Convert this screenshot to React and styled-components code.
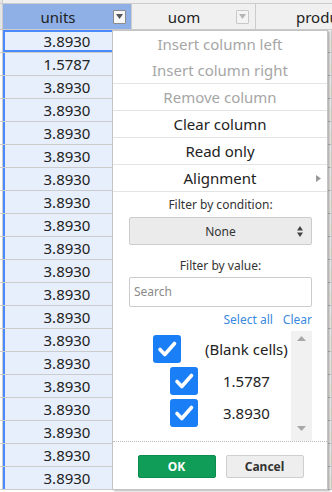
import styled, { createGlobalStyle } from 'styled-components'

const GlobalStyle = createGlobalStyle`
  html, body {
    margin: 0;
    padding: 0;
    background: #fff;
    overflow: hidden;
  }
  body {
    font-family: "Noto Sans", "DejaVu Sans", sans-serif;
    color: #222;
  }
`

const Page = styled.div`
  position: relative;
  width: 332px;
  height: 492px;
  overflow: hidden;
`

const TopStrip = styled.div`
  display: flex;
  height: 4px;
  box-sizing: border-box;
  background: #f0f0f0;
  border-bottom: 1px solid #ccc;
`

const Row = styled.div`
  display: flex;
  height: ${(p) => (p.$head ? 26 : 23)}px;
  box-sizing: border-box;
  border-bottom: 1px solid #ccc;
  background: ${(p) => (p.$head ? '#f0f0f0' : '#fff')};
`

const Gutter = styled.div`
  width: 3px;
  flex: none;
  box-sizing: border-box;
  border-right: 1px solid #ccc;
  background: ${(p) => (p.$head ? '#e6e6e6' : '#fff')};
`

const HeadCell = styled.div`
  display: flex;
  align-items: center;
  flex: ${(p) => (p.$w ? 'none' : '1')};
  width: ${(p) => (p.$w ? `${p.$w}px` : 'auto')};
  box-sizing: border-box;
  border-right: 1px solid #ccc;
  background: ${(p) => (p.$active ? '#8eb0e7' : '#f0f0f0')};
  font-size: 15px;
  color: #222;
`

const HeadLabel = styled.span`
  flex: 1;
  text-align: ${(p) => (p.$left ? 'left' : 'center')};
  padding-left: ${(p) => (p.$left ? '40px' : '0')};
  white-space: nowrap;
  overflow: hidden;
`

const DropButton = styled.div`
  display: flex;
  align-items: center;
  justify-content: center;
  width: 13px;
  height: 14px;
  box-sizing: border-box;
  margin-right: ${(p) => p.$mr}px;
  border: 1px solid ${(p) => (p.$faint ? '#c8c8c8' : '#8a8a8a')};
  background: ${(p) => (p.$faint ? '#f4f4f4' : '#f7f7f7')};
  border-radius: 1px;
`

const Cell = styled.div`
  flex: ${(p) => (p.$w ? 'none' : '1')};
  width: ${(p) => (p.$w ? `${p.$w}px` : 'auto')};
  box-sizing: border-box;
  border-right: 1px solid #ccc;
  font-size: 15px;
  line-height: 22px;
  white-space: nowrap;
  overflow: hidden;
`

const UnitCell = styled(Cell)`
  text-align: center;
  background: #e7effd;
  color: #222;
  box-shadow: ${(p) =>
    p.$current ? 'inset 0 0 0 2px #4b89ff' : 'inset 2px 0 0 #4b89ff'};
`

const ProductCell = styled(Cell)`
  padding-left: 74px;
  color: #7b1f2e;
`

const Menu = styled.div`
  position: absolute;
  left: 112px;
  top: 30px;
  width: 216px;
  height: 460px;
  box-sizing: border-box;
  background: #fff;
  border: 1px solid #c4c4c4;
  box-shadow: 2px 1px 2px rgba(0, 0, 0, 0.3);
  display: flex;
  flex-direction: column;
`

const Item = styled.div`
  display: grid;
  grid-template-columns: 20px 1fr 20px;
  align-items: center;
  height: 26px;
  font-size: 15px;
  color: ${(p) => (p.$disabled ? '#a6a6a6' : '#222')};
  text-align: center;
`

const SubArrow = styled.span`
  justify-self: end;
  padding-right: 6px;
  display: flex;
`

const Separator = styled.div`
  height: 1px;
  background: #e4e4e4;
`

const FilterSection = styled.div`
  display: flex;
  flex-direction: column;
  padding: 0 15px 0 16px;
`

const Label = styled.div`
  font-size: 12px;
  line-height: 16px;
  text-align: center;
  color: #333;
  margin-top: ${(p) => p.$mt}px;
`

const Select = styled.div`
  display: grid;
  grid-template-columns: 1fr 14px;
  align-items: center;
  height: 28px;
  margin-top: 4px;
  box-sizing: border-box;
  border: 1px solid #ccc;
  border-radius: 2px;
  background: #ebebeb;
  font-size: 12px;
  color: #333;
  text-align: center;
  padding-left: 14px;
`

const SearchBox = styled.div`
  height: 30px;
  margin-top: 3px;
  box-sizing: border-box;
  border: 1px solid #ccc;
  border-radius: 2px;
  padding-left: 4px;
  font-size: 12px;
  line-height: 28px;
  color: #8a8a8a;
`

const Links = styled.div`
  display: flex;
  justify-content: flex-end;
  gap: 10px;
  margin-top: 5px;
  font-size: 12px;
  line-height: 16px;
  color: #3b8ae0;
`

const ListBox = styled.div`
  display: flex;
  height: 110px;
  margin-top: 3px;
`

const ListItems = styled.div`
  flex: 1;
  padding-top: 2px;
`

const ListRow = styled.div`
  display: flex;
  align-items: center;
  height: 32px;
  padding-left: ${(p) => p.$indent}px;
  gap: ${(p) => p.$gap}px;
  font-size: 15px;
  color: #222;
`

const ScrollBar = styled.div`
  width: 21px;
  background: #f1f1f1;
  display: flex;
  flex-direction: column;
  justify-content: space-between;
  align-items: center;
  padding: 5px 0 10px;
  box-sizing: border-box;
`

const Dotted = styled.div`
  border-top: 1px dotted #bbb;
`

const Actions = styled.div`
  display: flex;
  justify-content: center;
  gap: 10px;
  padding-top: 13px;
  padding-left: 1px;
`

const Button = styled.div`
  width: 78px;
  height: 23px;
  box-sizing: border-box;
  border-radius: 2px;
  font-size: 12px;
  font-weight: bold;
  line-height: 21px;
  text-align: center;
  color: ${(p) => (p.$primary ? '#fff' : '#333')};
  background: ${(p) => (p.$primary ? '#0f9d58' : '#eee')};
  border: 1px solid ${(p) => (p.$primary ? '#0c8c4e' : '#cfcfcf')};
`

function Caret({ color }) {
  return (
    <svg width="7" height="5" viewBox="0 0 7 5">
      <path d="M0 0 H7 L3.5 5 Z" fill={color} />
    </svg>
  )
}

function Check() {
  return (
    <svg width="28" height="28" viewBox="0 0 28 28">
      <rect x="0" y="0" width="28" height="28" rx="3" fill="#1a7ef6" />
      <path
        d="M7 14.5 L11.8 19.5 L21.5 8.5"
        fill="none"
        stroke="#fff"
        strokeWidth="3.6"
        strokeLinecap="round"
        strokeLinejoin="round"
      />
    </svg>
  )
}

const values = [
  '3.8930', '1.5787', '3.8930', '3.8930', '3.8930', '3.8930', '3.8930',
  '3.8930', '3.8930', '3.8930', '3.8930', '3.8930', '3.8930', '3.8930',
  '3.8930', '3.8930', '3.8930', '3.8930', '3.8930', '3.8930',
]

export default function App() {
  return (
    <Page>
      <GlobalStyle />
      <TopStrip>
        <Gutter $head />
      </TopStrip>
      <Row $head>
        <Gutter $head />
        <HeadCell $w={129} $active>
          <HeadLabel>units</HeadLabel>
          <DropButton $mr={5}>
            <Caret color="#555" />
          </DropButton>
        </HeadCell>
        <HeadCell $w={124}>
          <HeadLabel>uom</HeadLabel>
          <DropButton $mr={6} $faint>
            <Caret color="#b5b5b5" />
          </DropButton>
        </HeadCell>
        <HeadCell>
          <HeadLabel $left>product</HeadLabel>
        </HeadCell>
      </Row>
      {values.map((v, i) => (
        <Row key={i}>
          <Gutter />
          <UnitCell $w={129} $current={i === 0}>
            {v}
          </UnitCell>
          <Cell $w={124} />
          <ProductCell>pcs</ProductCell>
        </Row>
      ))}

      <Menu>
        <Item $disabled>
          <span />
          <span>Insert column left</span>
          <span />
        </Item>
        <Item $disabled>
          <span />
          <span>Insert column right</span>
          <span />
        </Item>
        <Separator />
        <Item $disabled>
          <span />
          <span>Remove column</span>
          <span />
        </Item>
        <Separator />
        <Item>
          <span />
          <span>Clear column</span>
          <span />
        </Item>
        <Separator />
        <Item>
          <span />
          <span>Read only</span>
          <span />
        </Item>
        <Separator />
        <Item>
          <span />
          <span>Alignment</span>
          <SubArrow>
            <svg width="5" height="7" viewBox="0 0 5 7">
              <path d="M0 0 L5 3.5 L0 7 Z" fill="#999" />
            </svg>
          </SubArrow>
        </Item>
        <Separator />

        <FilterSection>
          <Label $mt={5}>Filter by condition:</Label>
          <Select>
            <span>None</span>
            <svg width="6" height="11" viewBox="0 0 6 11">
              <path d="M0 4.5 L3 0 L6 4.5 Z M0 6.5 L6 6.5 L3 11 Z" fill="#444" />
            </svg>
          </Select>
          <Label $mt={13}>Filter by value:</Label>
          <SearchBox>Search</SearchBox>
          <Links>
            <span>Select all</span>
            <span>Clear</span>
          </Links>
          <ListBox>
            <ListItems>
              <ListRow $indent={24} $gap={24}>
                <Check />
                <span>(Blank cells)</span>
              </ListRow>
              <ListRow $indent={41} $gap={25}>
                <Check />
                <span>1.5787</span>
              </ListRow>
              <ListRow $indent={41} $gap={25}>
                <Check />
                <span>3.8930</span>
              </ListRow>
            </ListItems>
            <ScrollBar>
              <svg width="9" height="5" viewBox="0 0 9 5">
                <path d="M0 5 L4.5 0 L9 5 Z" fill="#a8a8a8" />
              </svg>
              <svg width="9" height="5" viewBox="0 0 9 5">
                <path d="M0 0 H9 L4.5 5 Z" fill="#a8a8a8" />
              </svg>
            </ScrollBar>
          </ListBox>
        </FilterSection>
        <Dotted />
        <Actions>
          <Button $primary>OK</Button>
          <Button>Cancel</Button>
        </Actions>
      </Menu>
    </Page>
  )
}
